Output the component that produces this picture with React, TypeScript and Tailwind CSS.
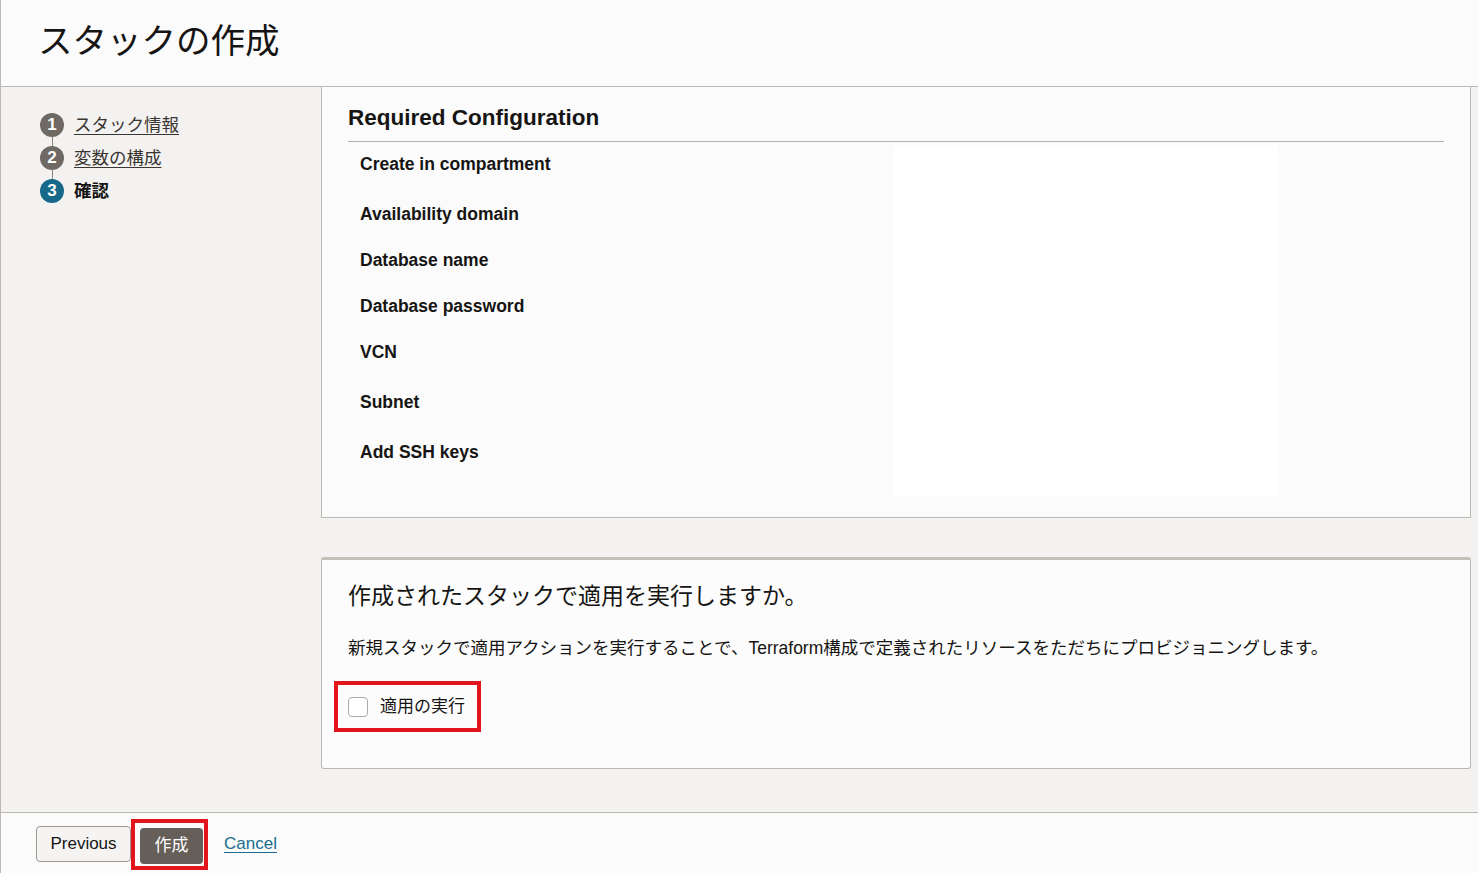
import React from "react";

const font = "font-['Liberation_Sans','Noto_Sans_CJK_JP',sans-serif]";

const steps = [
  { n: 1, label: "スタック情報", done: true },
  { n: 2, label: "変数の構成", done: true },
  { n: 3, label: "確認", done: false },
];

const fields = [
  { label: "Create in compartment", h: "h-[50px]" },
  { label: "Availability domain", h: "h-[46px]" },
  { label: "Database name", h: "h-[46px]" },
  { label: "Database password", h: "h-[46px]" },
  { label: "VCN", h: "h-[50px]" },
  { label: "Subnet", h: "h-[50px]" },
  { label: "Add SSH keys", h: "h-[63px]" },
];

const StepList = () => (
  <ol className="flex flex-col pl-[39px] pt-[26px]">
    {steps.map((s, i) => (
      <li key={s.n} className="flex flex-col">
        <div className="flex items-center gap-[10px]">
          <span
            className={`flex h-[24px] w-[24px] items-center justify-center rounded-full text-[17px] font-bold text-white ${
              s.done ? "bg-[#6f6964]" : "bg-[#17698a]"
            }`}
          >
            {s.n}
          </span>
          {s.done ? (
            <a className="text-[17.5px] leading-[24px] text-[#3a3632] underline underline-offset-[3px] decoration-[1px]">
              {s.label}
            </a>
          ) : (
            <span className="text-[17.5px] leading-[24px] font-bold text-[#161513]">{s.label}</span>
          )}
        </div>
        {i < steps.length - 1 && <div className="ml-[11.5px] h-[9px] w-px bg-[#8a847e]" />}
      </li>
    ))}
  </ol>
);

export default function App() {
  return (
    <div className={`${font} flex h-[873px] w-[1478px] flex-col overflow-hidden border-l border-[#bcb8b3] bg-[#f3f2f0] text-[#161513]`}>
      {/* header */}
      <header className="flex h-[87px] shrink-0 items-center border-b border-[#bcb8b3] bg-[#fbfbfb] pb-[4px] pl-[37px]">
        <h1 className="text-[34.5px] font-normal leading-none">スタックの作成</h1>
      </header>

      <div className="flex min-h-0 flex-1">
        {/* steps */}
        <aside className="w-[320px] shrink-0">
          <StepList />
        </aside>

        {/* main */}
        <main className="flex flex-1 flex-col pr-[7px]">
          <section className="border-x border-b border-[#bcb8b3] bg-[#fbfbfb] px-[26px] pb-[21px]">
            <h2 className="border-b border-[#b5b1ac] pb-[8px] pt-[16px] text-[22.5px] font-bold leading-[30px]">
              Required Configuration
            </h2>
            <div className="mt-[3px] grid grid-cols-[545px_385px]">
              <div className="flex flex-col">
                {fields.map((f) => (
                  <div key={f.label} className={`${f.h} pl-[12px] pt-[9px] text-[17.5px] font-bold leading-[20px]`}>
                    {f.label}
                  </div>
                ))}
              </div>
              <div className="bg-white" />
            </div>
          </section>

          <section className="mt-[39px] rounded-[3px] border border-t-[3px] border-[#bcb8b3] border-t-[#c4bfb9] bg-[#fcfcfc] px-[26px] pb-[36px] pt-[20px]">
            <h2 className="text-[23px] font-normal leading-[32px]">作成されたスタックで適用を実行しますか。</h2>
            <p className="mt-[24px] text-[17.5px] leading-[24px]">
              新規スタックで適用アクションを実行することで、Terraform構成で定義されたリソースをただちにプロビジョニングします。
            </p>
            <div className="-ml-[14px] mt-[21px] inline-flex h-[51px] w-[147px] items-center gap-[12px] border-[4px] border-[#e3141c] pl-[10px]">
              <span className="h-[20px] w-[20px] rounded-[4px] border border-[#b0aaa4] bg-white" />
              <span className="text-[17px] leading-[24px]">適用の実行</span>
            </div>
          </section>
        </main>
      </div>

      {/* footer */}
      <footer className="flex h-[61px] shrink-0 items-center border-t border-[#bcb8b3] bg-[#fbfbfb] pl-[35px] pt-[2px]">
        <button className="h-[36px] w-[95px] rounded-[4px] border border-[#9e9892] bg-[#f5f4f2] text-[17px] text-[#161513]">
          Previous
        </button>
        <div className="border-[4px] border-[#e3141c] pb-[2px] pl-[5px] pr-[1px] pt-[5px]">
          <button className="h-[36px] w-[63px] rounded-[4px] bg-[#655e59] text-[17px] text-white">作成</button>
        </div>
        <a className="ml-[16px] text-[17px] text-[#1a6d8f] underline underline-offset-[3px]">Cancel</a>
      </footer>
    </div>
  );
}
